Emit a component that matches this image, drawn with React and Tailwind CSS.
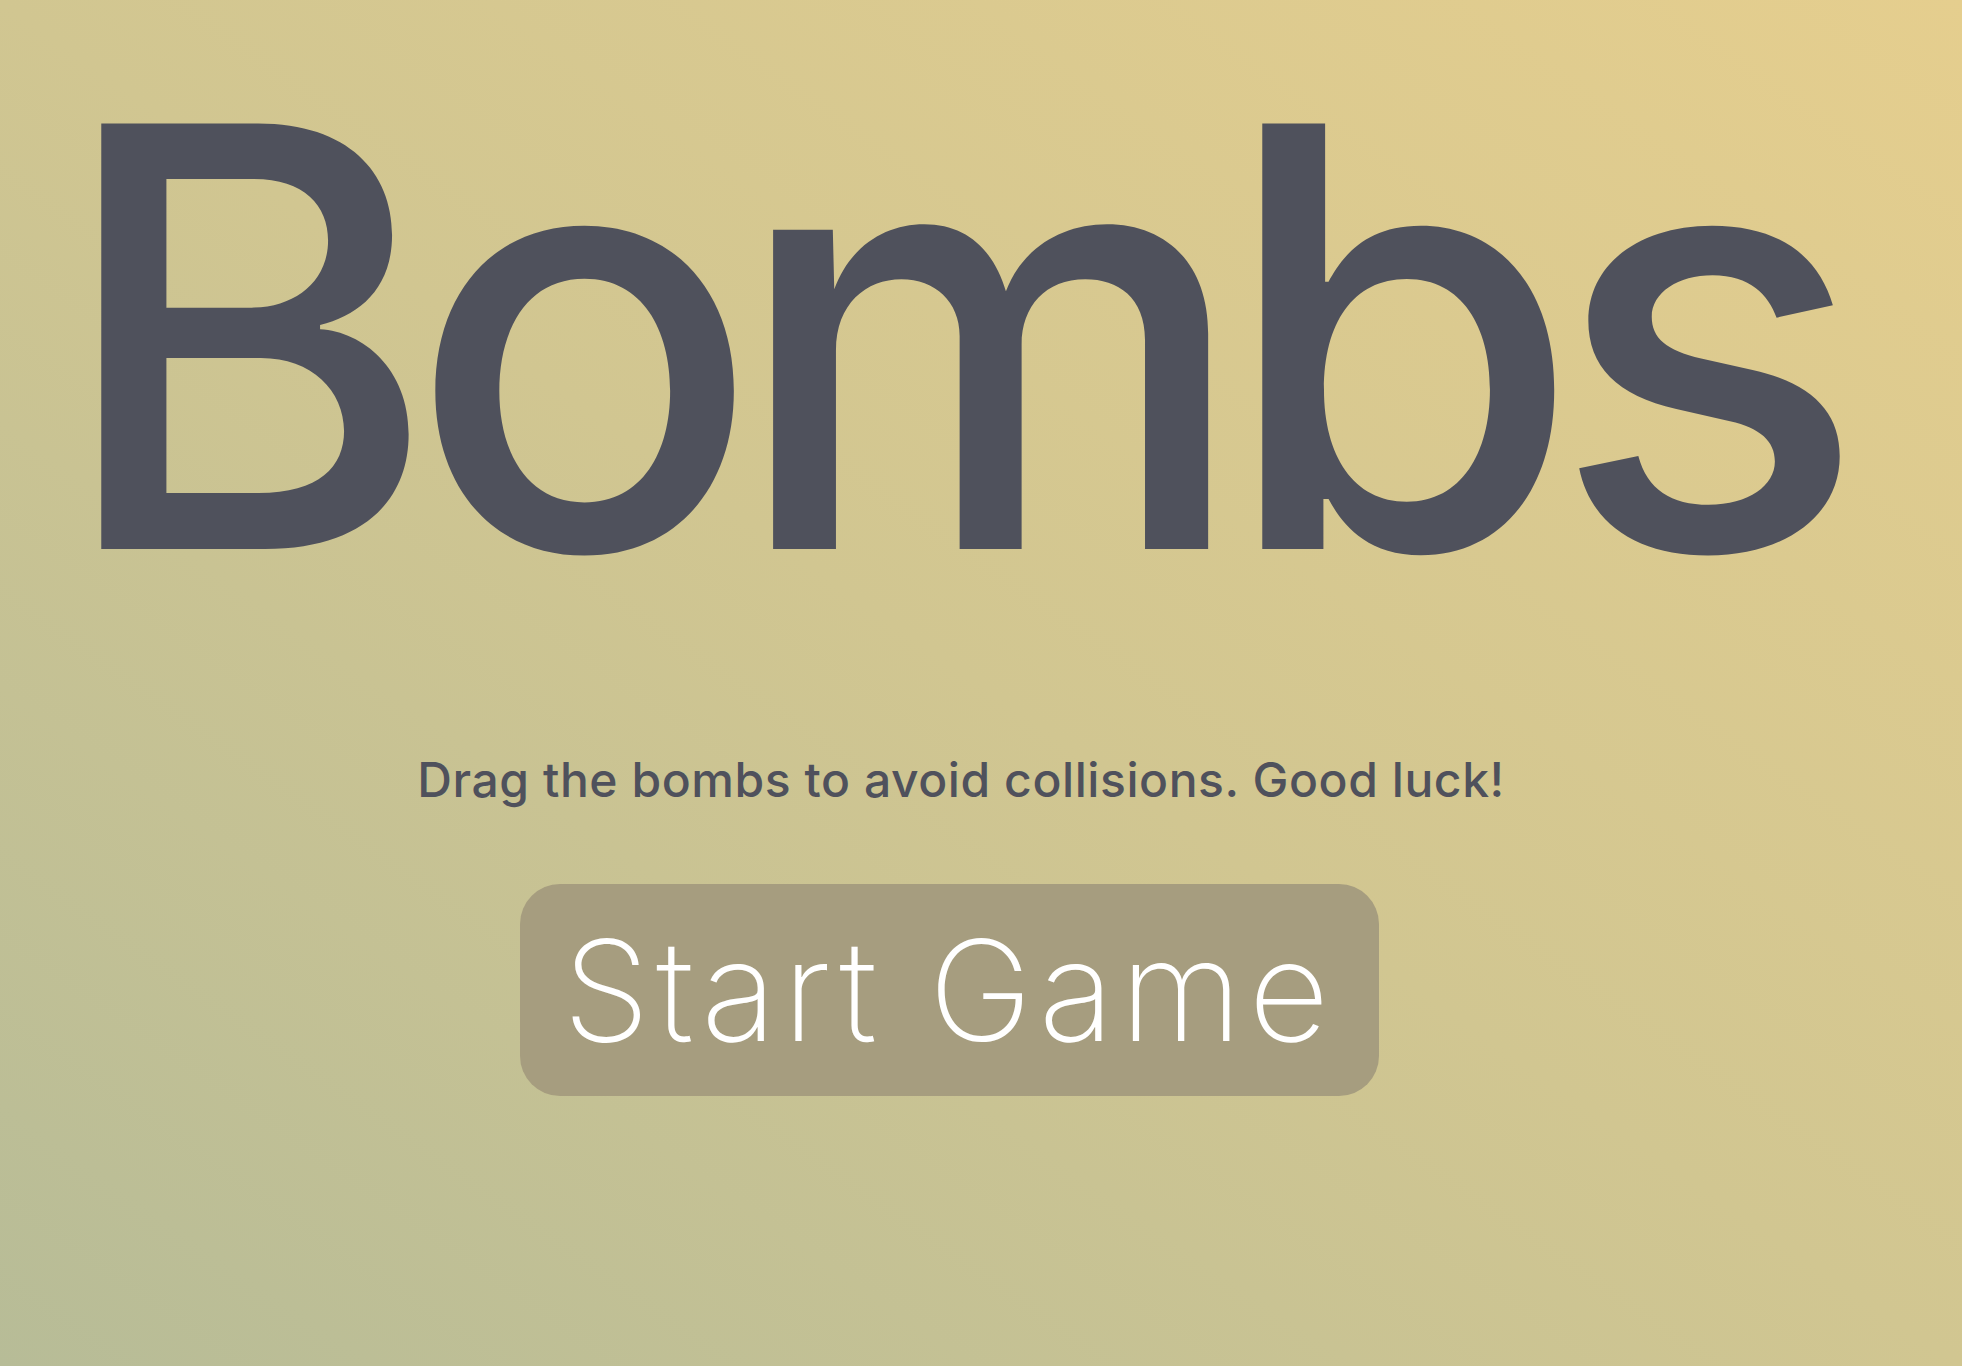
import React from 'react';

export default function App() {
  return (
    <div className="min-h-screen w-full bg-gradient-to-tr from-[#b7bc97] via-[#d1c691] to-[#e5ce8e] font-['Inter','Liberation_Sans',sans-serif] text-[#4f515c]">
      <div className="flex flex-col items-center pr-[40px]">
        {/* Title */}
        <h1 className="mt-0 ml-[-32px] px-[40px] text-[585px] leading-[1.15] font-medium tracking-[-0.052em] whitespace-nowrap">
          Bombs
        </h1>

        {/* Subtitle */}
        <p className="mt-[77px] text-[48px] leading-[60px] font-medium tracking-[0.012em]">
          Drag the bombs to avoid collisions. Good luck!
        </p>

        {/* Start button */}
        <button className="mt-[74px] mr-[24px] flex h-[212px] w-[859px] items-center justify-center rounded-[40px] bg-[#a69d7f] text-[140px] font-extralight leading-none tracking-[0.045em] text-white">
          Start Game
        </button>
      </div>
    </div>
  );
}
